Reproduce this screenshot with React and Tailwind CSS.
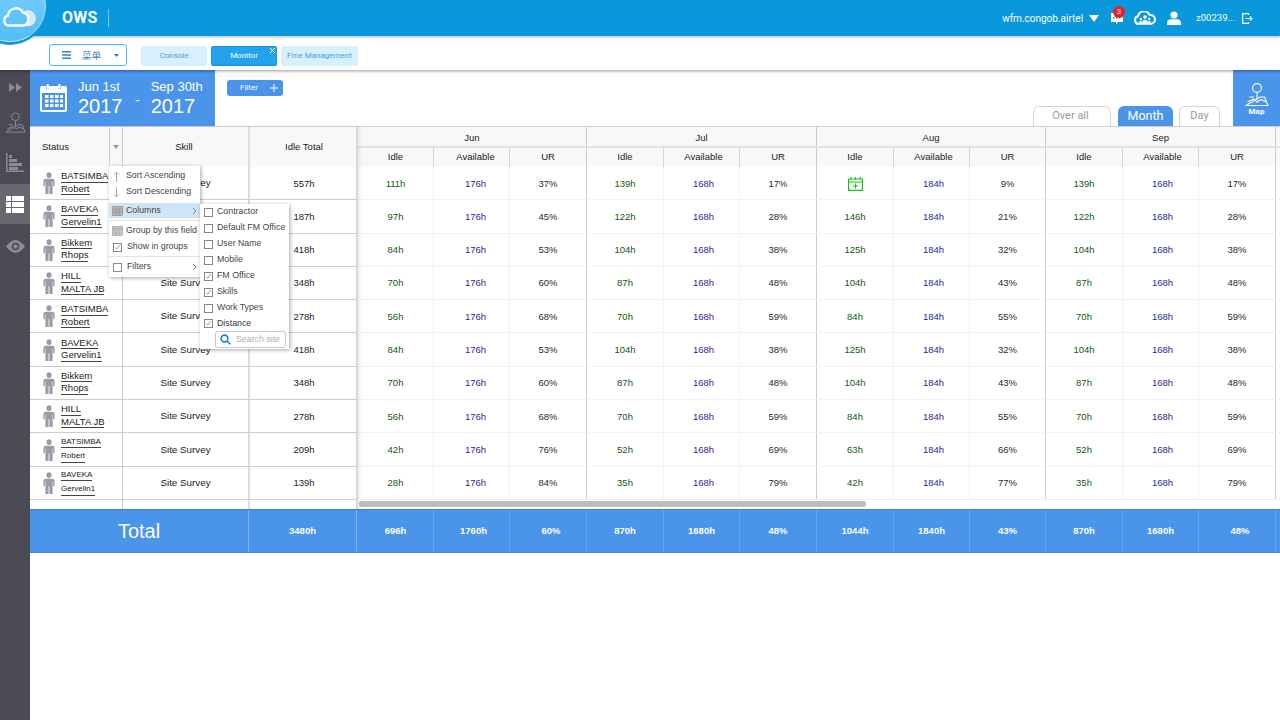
const rows = [
  ["BATSIMBA", "Robert", "557h", ["111h", "176h", "37%", "139h", "168h", "17%", "icon", "184h", "9%", "139h", "168h", "17%"]],
  ["BAVEKA", "Gervelin1", "187h", ["97h", "176h", "45%", "122h", "168h", "28%", "146h", "184h", "21%", "122h", "168h", "28%"]],
  ["Bikkem", "Rhops", "418h", ["84h", "176h", "53%", "104h", "168h", "38%", "125h", "184h", "32%", "104h", "168h", "38%"]],
  ["HILL", "MALTA JB", "348h", ["70h", "176h", "60%", "87h", "168h", "48%", "104h", "184h", "43%", "87h", "168h", "48%"]],
  ["BATSIMBA", "Robert", "278h", ["56h", "176h", "68%", "70h", "168h", "59%", "84h", "184h", "55%", "70h", "168h", "59%"]],
  ["BAVEKA", "Gervelin1", "418h", ["84h", "176h", "53%", "104h", "168h", "38%", "125h", "184h", "32%", "104h", "168h", "38%"]],
  ["Bikkem", "Rhops", "348h", ["70h", "176h", "60%", "87h", "168h", "48%", "104h", "184h", "43%", "87h", "168h", "48%"]],
  ["HILL", "MALTA JB", "278h", ["56h", "176h", "68%", "70h", "168h", "59%", "84h", "184h", "55%", "70h", "168h", "59%"]],
  ["BATSIMBA", "Robert", "209h", ["42h", "176h", "76%", "52h", "168h", "69%", "63h", "184h", "66%", "52h", "168h", "69%"], true],
  ["BAVEKA", "Gervelin1", "139h", ["28h", "176h", "84%", "35h", "168h", "79%", "42h", "184h", "77%", "35h", "168h", "79%"], true],
];

const totals = ["696h", "1760h", "60%", "870h", "1680h", "48%", "1044h", "1840h", "43%", "870h", "1680h", "48%"];
const months = ["Jun", "Jul", "Aug", "Sep"];
const subCols = ["Idle", "Available", "UR"];
const leftGrid = "grid grid-cols-[93px_127px_108px]";
const rightGrid = "grid grid-cols-[76px_76px_77px_77px_76px_77px_77px_76px_76px_77px_76px_77px_1fr]";
const colors = ["text-[#0f5a0f]", "text-[#1f2b96]", "text-[#2a2a2a]"];

// the "Available" column text sits right of centre in the reference
const cellShift = (k) => (k === 1 ? "pl-[8px]" : k % 3 === 1 ? "pl-[4px]" : "");

const Person = () => (
  <svg width="12" height="22" viewBox="0 0 14 23" preserveAspectRatio="none" className="shrink-0" fill="#9a9ba8">
    <circle cx="7" cy="3.2" r="3" />
    <path d="M3 7h8q2.5 0 2.5 2.5V15h-1.7V10h-.6v13H7.5v-8h-1v8H2.800V10h-.6v5H.5V9.500Q.5 7 3 7z" />
  </svg>
);

const Check = ({ on }) => (
  <span className="w-[9px] h-[9px] border border-[#888] bg-white flex items-center justify-center shrink-0">
    {on && (
      <svg width="9" height="9" viewBox="0 0 9 9" fill="none" stroke="#777" strokeWidth="1">
        <path d="M1.5 4.5l2 2 4-5" />
      </svg>
    )}
  </span>
);

const MapPin = ({ color, width, height, strokeWidth }) => (
  <svg width={width} height={height} viewBox="0 0 24 23" fill="none" stroke={color} strokeWidth={strokeWidth}>
    <circle cx="12" cy="5" r="4.4" />
    <path d="M12 9.4V17M4.500 14H9M15 14h4.500L23 22.500H1zM2.500 19l6-3 3.500 3 4-2.500 5.500 2.500" />
  </svg>
);

const subMenu = [
  ["Contractor", false],
  ["Default FM Office", false],
  ["User Name", false],
  ["Mobile", false],
  ["FM Office", true],
  ["Skills", true],
  ["Work Types", false],
  ["Distance", true],
];

const Chevron = () => (
  <svg width="5" height="8" viewBox="0 0 5 8" fill="none" stroke="#888" className="ml-auto mr-[3px]">
    <path d="M1 1l3 3-3 3" />
  </svg>
);

function Menus() {
  return (
    <>
      <div className="absolute left-[79px] top-[39px] w-[91px] h-[111px] bg-white shadow-[1px_1px_4px_rgba(0,0,0,0.35)] text-[8.8px] text-[#444] flex flex-col z-10">
        <div className="h-[16px] mt-[2px] flex items-center pl-[4px] gap-[6px]">
          <svg width="7" height="11" viewBox="0 0 7 11" fill="none" stroke="#aaa"><path d="M3.5 11V1M1 3.5L3.5 1 6 3.5" /></svg>
          Sort Ascending
        </div>
        <div className="h-[16px] flex items-center pl-[4px] gap-[6px]">
          <svg width="7" height="11" viewBox="0 0 7 11" fill="none" stroke="#aaa"><path d="M3.5 0v10M1 7.5L3.5 10 6 7.5" /></svg>
          Sort Descending
        </div>
        <div className="h-[15px] mt-[3px] flex items-center pl-[3px] gap-[3px] bg-[#cfe4f5]">
          <svg width="11" height="10" viewBox="0 0 11 10" fill="#b5b5b5" stroke="#888" strokeWidth="0.6"><rect x=".5" y=".5" width="10" height="9" /><path d="M.5 3h10M4 3v6.5M7 3v6.5M.5 6h10" fill="none" /></svg>
          Columns
          <Chevron />
        </div>
        <div className="mt-[2px] border-t border-[#e4e4e4] pt-[2px]">
          <div className="h-[16px] flex items-center pl-[3px] gap-[3px]">
            <svg width="11" height="10" viewBox="0 0 11 10" fill="#c5c5c5" stroke="#999" strokeWidth="0.6"><rect x=".5" y=".5" width="10" height="9" /><path d="M.5 3h10M3.5 5v4M7 5v4" fill="none" /></svg>
            Group by this field
          </div>
        </div>
        <div className="h-[16px] flex items-center pl-[4px] gap-[5px]">
          <Check on />
          Show in groups
        </div>
        <div className="mt-[1px] border-t border-[#e4e4e4] h-[21px] flex items-center pl-[4px] gap-[5px]">
          <Check />
          Filters
          <Chevron />
        </div>
      </div>
      <div className="absolute left-[170px] top-[77px] w-[89px] h-[145px] bg-white shadow-[1px_1px_4px_rgba(0,0,0,0.35)] text-[8.8px] text-[#444] z-20 flex flex-col">
        {subMenu.map(([label, on], i) => (
          <div key={label + i} className={`shrink-0 flex items-center pl-[4px] gap-[4px] ${label === "Distance" ? "h-[15px] font-medium text-[#333]" : "h-[16px]"}`}>
            <Check on={on} />
            {label}
          </div>
        ))}
        <div className="ml-[15px] w-[71px] h-[17px] border border-[#c6c6c6] rounded-[3px] flex items-center pl-[4px] gap-[5px] text-[#b0b0b0]">
          <svg width="11" height="11" viewBox="0 0 11 11" fill="none" stroke="#1d7fd1" strokeWidth="1.6"><circle cx="4.5" cy="4.5" r="3.4" /><path d="M7 7l3.3 3.3" /></svg>
          Search site
        </div>
      </div>
    </>
  );
}

function Sidebar() {
  return (
    <div className="w-[30px] shrink-0 bg-[#4a4a55] flex flex-col items-center">
      <div className="h-[34px] flex items-center justify-center w-full">
        <svg width="13" height="9" viewBox="0 0 13 9" fill="#8b8b94"><path d="M0 0l6 4.5L0 9zM7 0l6 4.5L7 9z" /></svg>
      </div>
      <div className="h-[36px] flex items-center justify-center w-full">
        <MapPin color="#8b8b94" width={21} height={21} strokeWidth={1.1} />
      </div>
      <div className="h-[44px] flex items-center justify-center w-full">
        <svg width="18" height="19" viewBox="0 0 18 19" fill="#8b8b94"><path d="M0 0h1.500v17.500H18V19H0z" /><path d="M3 2h3v3H3zM3 6h8v3H3zM3 10h13v3H3zM3 14h9v3H3z" /></svg>
      </div>
      <div className="h-[40px] flex items-center justify-center w-full bg-[#67676f]">
        <svg width="18" height="17" viewBox="0 0 18 17" fill="#fff"><path d="M0 0h5v5H0zM6 0h12v5H6zM0 6h5v5H0zM6 6h12v5H6zM0 12h5v5H0zM6 12h12v5H6z" /></svg>
      </div>
      <div className="h-[44px] flex items-center justify-center w-full">
        <svg width="19" height="13" viewBox="0 0 19 13"><path d="M0 6.5Q9.5-6.5 19 6.5 9.5 19.5 0 6.5z" fill="#8b8b94" /><circle cx="9.5" cy="6.5" r="3.7" fill="#4a4a55" /><circle cx="9.5" cy="6.5" r="2.2" fill="#8b8b94" /></svg>
      </div>
    </div>
  );
}

function Header() {
  return (
    <div className="h-[36px] shrink-0 bg-[#0998dc] shadow-[0_1px_3px_rgba(0,0,0,0.3)] flex items-center text-white relative z-30">
      <div className="absolute left-[-26px] top-[-30px] w-[72px] h-[72px] rounded-full bg-gradient-to-b from-[#7fd4fd] to-[#52bdf7] border border-[#a5e0fb] shadow-[0_3px_0_#1a94d9] flex items-end justify-center pb-[14px]">
        <svg width="36" height="20" viewBox="0 0 36 20" className="ml-[19px]">
          <path d="M22 5a6 6 0 0 1 5-1 7.500 7.500 0 0 1 1 14.500H20z" fill="#dbe9f2" stroke="#eef6fa" strokeWidth="1" />
          <path d="M7 18.500a5 5 0 0 1-1-9.800A8 8 0 0 1 21 5.500a6.800 6.800 0 0 1 1 13z" fill="#5fc3f8" stroke="#fff" strokeWidth="2.3" />
        </svg>
      </div>
      <span className="ml-[62px] text-[16px] font-bold font-['Roboto',sans-serif] tracking-[0.2px]">OWS</span>
      <span className="ml-[11px] w-px h-[18px] bg-[#7cc9f0]" />
      <div className="ml-auto flex items-center font-['Roboto',sans-serif] text-[10px]">
        <span>wfm.congob.airtel</span>
        <svg width="10" height="7" viewBox="0 0 10 7" fill="#fff" className="ml-[6px]"><path d="M0 0h10L5 7z" /></svg>
        <span className="relative ml-[11px]">
          <svg width="13" height="14" viewBox="0 0 13 14" fill="#fff" className="block"><path d="M1 2h12v9H8l-2 2.500V11H1z" /><path d="M3 6h1.500v1.500H3zM6 6h1.500v1.500H6zM9 6h1.500v1.500H9z" fill="#0998dc" /></svg>
          <span className="absolute left-[3px] top-[-5px] w-[12px] h-[12px] rounded-full bg-[#ea2027] text-[8px] leading-[12px] text-center">3</span>
        </span>
        <svg width="23" height="14" viewBox="0 0 23 14" className="ml-[11px]" fill="none">
          <path d="M5 12.800a3.800 3.800 0 0 1-1-7.500A6 6 0 0 1 15.500 4a4.500 4.500 0 0 1 2 8.800z" stroke="#fff" strokeWidth="2" />
          <g fill="#fff">
            <circle cx="11" cy="6" r="1.800" /><path d="M8.500 13v-2.500q0-1.700 2.500-1.700t2.500 1.700V13z" />
            <circle cx="6.800" cy="8" r="1.200" /><path d="M5.200 13v-1.800q0-1.200 1.600-1.200t1.600 1.200V13z" />
            <circle cx="15.200" cy="8" r="1.200" /><path d="M13.600 13v-1.800q0-1.200 1.600-1.200t1.600 1.200V13z" />
          </g>
        </svg>
        <svg width="14" height="14" viewBox="0 0 14 14" fill="#fff" className="ml-[10px]"><circle cx="7" cy="4" r="3.5" /><path d="M0 14v-2q0-3.500 4-3.800h6q4 .3 4 3.800v2z" /></svg>
        <span className="ml-[15px] text-[9.5px]">z00239...</span>
        <svg width="11" height="11" viewBox="0 0 11 11" fill="none" stroke="#fff" strokeWidth="1.2" className="ml-[7px] mr-[27px]"><path d="M6.500 2V.7H.7v9.600h5.800V9M3.500 5.500h6M8 3.500l2 2-2 2" /></svg>
      </div>
    </div>
  );
}

function SubBar() {
  return (
    <div className="h-[34px] shrink-0 bg-white shadow-[0_1px_3px_rgba(0,0,0,0.4)] flex items-center relative z-20 pl-[49px] pt-[4px] text-[8px] font-['Roboto',sans-serif]">
      <div className="w-[78px] h-[22px] border border-[#55b6f5] rounded-[3px] flex items-center text-[#3a7fb5] text-[9.5px] font-['Noto_Sans_CJK_SC',sans-serif] pl-[12px]">
        <svg width="9" height="8" viewBox="0 0 9 8" fill="#3f7cb0"><path d="M0 0h9v1.500H0zM0 3.200h9v1.500H0zM0 6.500h9V8H0z" /></svg>
        <span className="ml-[11px]">菜单</span>
        <svg width="5" height="3" viewBox="0 0 5 3" fill="#2c7fc2" className="ml-[13px]"><path d="M0 0h5L2.500 3z" /></svg>
      </div>
      <div className="ml-[14px] w-[66px] h-[20px] mt-[1px] rounded-[2px] bg-[#d8effc] text-[#3ea4e6] flex items-center justify-center">Console</div>
      <div className="ml-[4px] w-[66px] h-[20px] mt-[1px] rounded-[2px] bg-[#22a2ef] border border-[#1c8fd6] text-white flex items-center justify-center relative">
        Monitor
        <svg width="5" height="5" viewBox="0 0 5 5" stroke="#fff" className="absolute right-[1px] top-[1px]"><path d="M0 0l5 5M5 0L0 5" /></svg>
      </div>
      <div className="ml-[4px] w-[77px] h-[20px] mt-[1px] rounded-[2px] bg-[#d8effc] text-[#3ea4e6] flex items-center justify-center">Fme Management</div>
    </div>
  );
}

function Toolbar() {
  return (
    <div className="h-[57px] shrink-0 flex border-b border-[#cfcfcf]">
      <div className="w-[185px] bg-[#4a94ea] text-white flex items-center pl-[10px] font-['Liberation_Sans',sans-serif]">
        <svg width="27" height="30" viewBox="0 0 27 30" fill="#fff" className="mb-[1px]">
          <path fillRule="evenodd" d="M2 3h4v3h3V3h9v3h3V3h4q2 0 2 2v22q0 2-2 2H2q-2 0-2-2V5q0-2 2-2zM2 10v17h23V10z" />
          <rect x="6.5" y="1" width="2.5" height="5" rx="1.2" />
          <rect x="18" y="1" width="2.5" height="5" rx="1.2" />
          <path d="M5 12h3.500v3H5zM10 12h3.500v3H10zM15 12h3.500v3H15zM20 12h3v3h-3zM5 16.500h3.500v3H5zM10 16.500h3.500v3H10zM15 16.500h3.500v3H15zM20 16.500h3v3h-3zM5 21h3.500v3H5zM10 21h3.500v3H10zM15 21h3.500v3H15zM20 21h3v3h-3z" />
        </svg>
        <div className="ml-[11px] w-[47px] flex flex-col">
          <span className="text-[13px] leading-[16px]">Jun 1st</span>
          <span className="text-[20px] leading-[23px]">2017</span>
        </div>
        <span className="ml-[10px] text-[14px] mt-[5px]">-</span>
        <div className="ml-[11px] flex flex-col">
          <span className="text-[13px] leading-[16px]">Sep 30th</span>
          <span className="text-[20px] leading-[23px]">2017</span>
        </div>
      </div>
      <div className="ml-[12px] mt-[10px] w-[56px] h-[16px] rounded-[3px] bg-[#4a94ea] text-white text-[8px] flex items-center pl-[13px] font-['Roboto',sans-serif]">
        Filter
        <svg width="8" height="8" viewBox="0 0 8 8" stroke="#fff" className="ml-[12px]"><path d="M4 0v8M0 4h8" /></svg>
      </div>
      <div className="ml-auto flex items-end font-['Roboto',sans-serif]">
        <div className="w-[78px] h-[20px] border border-b-0 border-[#d4d4d4] rounded-t-[6px] text-[#999] text-[11px] flex items-center justify-center pr-[3px]">Over all</div>
        <div className="ml-[7px] w-[55px] h-[20px] bg-[#4a94ea] rounded-t-[6px] text-white text-[12.5px] flex items-center justify-center">Month</div>
        <div className="ml-[6px] w-[41px] h-[20px] border border-b-0 border-[#d4d4d4] rounded-t-[6px] text-[#999] text-[11px] flex items-center justify-center">Day</div>
        <div className="ml-[13px] w-[47px] h-[56px] bg-[#4a94ea] text-white text-[8px] font-bold flex flex-col items-center pt-[13px]">
          <MapPin color="#fff" width={24} height={23} strokeWidth={1.1} />
          <span className="mt-[1px] leading-[10px]">Map</span>
        </div>
      </div>
    </div>
  );
}

function LeftPanel() {
  return (
    <div className="w-[328px] shrink-0 relative z-10 border-r-2 border-[#d8d8d8] shadow-[2px_0_3px_rgba(0,0,0,0.08)] font-['Liberation_Sans',sans-serif] text-[9.5px] text-[#222]">
      <div className={`${leftGrid} h-[40px] bg-[#f8f8f8]`}>
        <div className="flex items-center border-r border-[#ccc]">
          <span className="pl-[12px] w-[79px]">Status</span>
          <div className="h-full flex-1 border-l border-[#ccc] flex items-center justify-center">
            <svg width="6" height="4" viewBox="0 0 6 4" fill="#999"><path d="M0 0h6L3 4z" /></svg>
          </div>
        </div>
        <div className="flex items-center justify-center border-r-2 border-[#ddd] pr-[3px]">Skill</div>
        <div className="flex items-center justify-center">Idle Total</div>
      </div>
      {rows.map((r, i) => (
        <div key={i} className={`${leftGrid} h-[33.3px] border-b border-[#ccc]`}>
          <div className="flex items-center border-r border-[#ccc] pl-[13px]">
            <Person />
            <div className={`ml-[6px] flex flex-col items-start ${r[4] ? "text-[8px] gap-[2px]" : "text-[9.5px]"} leading-[10.5px] text-[#222]`}>
              <span className="border-b border-[#444] mb-[1px]">{r[0]}</span>
              <span className="border-b border-[#444]">{r[1]}</span>
            </div>
          </div>
          <div className="flex items-center justify-center border-r-2 border-[#ddd] text-[9.8px] pt-[1px]">Site Survey</div>
          <div className="flex items-center justify-center pt-[1px]">{r[2]}</div>
        </div>
      ))}
      <div className={`${leftGrid} h-[9px]`}>
        <div className="border-r border-[#ccc]" />
        <div className="border-r-2 border-[#ddd]" />
        <div />
      </div>
      <Menus />
    </div>
  );
}

function RightPanel() {
  return (
    <div className="flex-1 min-w-0 font-['Liberation_Sans',sans-serif] text-[9.5px] text-[#222]">
      <div className={`${rightGrid} h-[21px] bg-[#f8f8f8] border-b-2 border-[#e2e2e2]`}>
        {months.map((m) => (
          <div key={m} className="col-span-3 flex items-center justify-center border-r border-[#ccc] pt-[3px]">{m}</div>
        ))}
      </div>
      <div className={`${rightGrid} h-[19px] bg-[#f8f8f8]`}>
        {months.flatMap((m, mi) =>
          subCols.map((c, k) => (
            <div key={m + c} className={`flex items-center justify-center border-r ${k === 2 ? "border-[#ccc]" : "border-[#d5d5d5]"} ${cellShift(mi * 3 + k)}`}>{c}</div>
          ))
        )}
      </div>
      {rows.map((r, i) => (
        <div key={i} className={`${rightGrid} h-[33.3px] border-b border-[#f2f2f2]`}>
          {r[3].map((v, k) => (
            <div key={k} className={`flex items-center justify-center border-r pt-[1px] ${k % 3 === 2 ? "border-[#ccc]" : "border-[#f2f2f2]"} ${colors[k % 3]} ${cellShift(k)}`}>
              {v === "icon" ? (
                <svg width="15" height="15" viewBox="0 0 15 15" fill="none" stroke="#16c21c" strokeWidth="1.2">
                  <path d="M.6 3h13.800v11.400H.6zM.6 6h13.800" />
                  <path d="M3 1v2.500M7.500 1v2.500M12 1v2.500M7.500 7.500v5M5 10h5" />
                </svg>
              ) : v}
            </div>
          ))}
        </div>
      ))}
      <div className="h-[9px] pt-[1.5px] pl-[1px]">
        <div className="w-[507px] h-[5.5px] rounded-[3px] bg-[#bdbdbd]" />
      </div>
    </div>
  );
}

function TotalRow() {
  return (
    <div className="flex h-[44px] shrink-0 bg-[#4a94ea] border-y border-[#3c86e0] text-white font-['Liberation_Sans',sans-serif] text-[9.5px] font-bold">
      <div className="w-[219px] border-r border-[#7fb3f0] flex items-center justify-center text-[20px] font-normal">Total</div>
      <div className="w-[108px] border-r border-[#7fb3f0] flex items-center justify-center">3480h</div>
      <div className={`flex-1 ml-[1px] ${rightGrid}`}>
        {totals.map((t, i) => (
          <div key={i} className={`flex items-center justify-center border-r border-[#6aa6ee] ${i === 1 ? "pl-[4px]" : i === 2 || i === 11 ? "pl-[6px]" : ""}`}>{t}</div>
        ))}
      </div>
    </div>
  );
}

export default function App() {
  return (
    <div className="w-[1280px] h-[720px] overflow-hidden bg-white flex flex-col">
      <Header />
      <SubBar />
      <div className="flex flex-1 min-h-0">
        <Sidebar />
        <div className="flex-1 min-w-0 flex flex-col">
          <Toolbar />
          <div className="flex">
            <LeftPanel />
            <RightPanel />
          </div>
          <TotalRow />
        </div>
      </div>
    </div>
  );
}
